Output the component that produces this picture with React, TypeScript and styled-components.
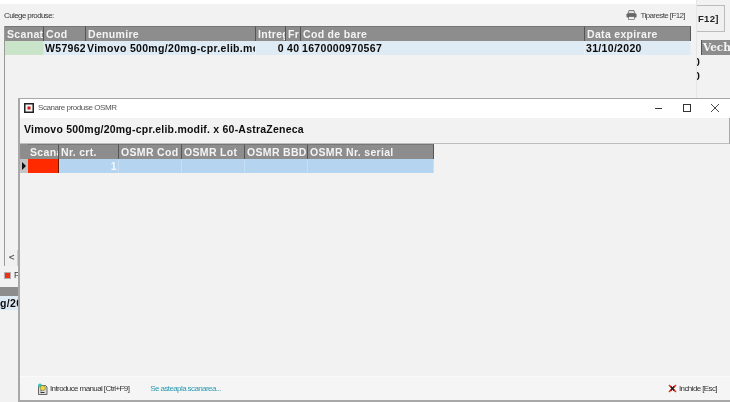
import React from "react";
import styled, { createGlobalStyle } from "styled-components";

const Global = createGlobalStyle`
  html, body { margin: 0; padding: 0; background: #f2f2f2; }
  #root { width: 730px; height: 402px; overflow: hidden; }
`;

const Desktop = styled.div`
  position: relative;
  width: 730px;
  height: 402px;
  overflow: hidden;
  background: #f2f2f2;
  font-family: "Liberation Sans", Arial, sans-serif;
  filter: blur(0.3px);
`;

const UI = `font-family: "Liberation Sans", Arial, sans-serif; font-size: 8px; letter-spacing: -0.6px; color: #333;`;
const Bold = `font-family: "Liberation Sans", Arial, sans-serif; font-weight: 700; font-size: 10.5px; letter-spacing: 0.32px;`;

const Window = styled.section<{ $x: number; $y: number; $w: number; $h: number }>`
  position: absolute;
  left: ${(p) => p.$x}px;
  top: ${(p) => p.$y}px;
  width: ${(p) => p.$w}px;
  height: ${(p) => p.$h}px;
  box-sizing: border-box;
`;

const MainWindow = styled(Window)`
  background: #f2f2f2;
  border-right: 1px solid #e6e6e6;
  padding: 4px 0 0 4px;
  display: flex;
  flex-direction: column;
  &::before {
    content: "";
    position: absolute;
    left: 0; top: 0; right: 0;
    height: 4px;
    background: #fff;
  }
`;

const TopBar = styled.div`
  height: 22px;
  display: flex;
  align-items: center;
  justify-content: space-between;
  padding-right: 11px;
  ${UI}
`;

const PrintAction = styled.div`
  display: flex;
  align-items: center;
  gap: 3px;
  color: #444;
`;

const GridFrame = styled.div`
  width: 687px;
  height: 240px;
  border-left: 1px solid #9a9a9a;
  box-sizing: border-box;
  position: relative;
`;

const Row = styled.div<{ $cols: string; $h: number }>`
  display: grid;
  grid-template-columns: ${(p) => p.$cols};
  height: ${(p) => p.$h}px;
`;

const HeadCell = styled.div`
  background: #8d8d8d;
  color: #f4f4f4;
  ${Bold}
  line-height: 15px;
  padding-left: 2px;
  border-right: 1px solid #555;
  border-top: 1px solid #777;
  box-sizing: border-box;
  white-space: nowrap;
  overflow: hidden;
`;

const Cell = styled.div<{ $bg?: string; $right?: boolean; $color?: string }>`
  background: ${(p) => p.$bg || "#deeaf4"};
  color: ${(p) => p.$color || "#0b0b0b"};
  ${Bold}
  line-height: 14px;
  text-align: ${(p) => (p.$right ? "right" : "left")};
  padding: 0 1px;
  white-space: nowrap;
  overflow: hidden;
  box-sizing: border-box;
  border-right: 1px solid ${(p) => (p.$bg === "#ff2a00" ? "#6a1a00" : "rgba(255,255,255,.25)")};
`;

const ScrollLeft = styled.span`
  position: absolute;
  left: 1px;
  bottom: 0;
  width: 11px;
  height: 16px;
  background: #f0f0f0;
  font-family: "DejaVu Sans", sans-serif;
  font-size: 8px;
  font-weight: 700;
  line-height: 16px;
  text-align: center;
  color: #555;
`;

const ScrollEnd = styled.span`
  position: absolute;
  left: 12px;
  bottom: 0;
  width: 1px;
  height: 16px;
  background: #cfcfcf;
`;

const Legend = styled.div`
  display: flex;
  align-items: center;
  gap: 3px;
  padding-top: 3px;
  height: 12px;
  ${UI}
  font-size: 8.5px;
  letter-spacing: 0;
`;

const Swatch = styled.span`
  width: 5px;
  height: 5px;
  background: #f03010;
  border: 1px solid #b0b0b0;
  box-sizing: content-box;
`;

const LowerGrid = styled(Window)`
  display: flex;
  flex-direction: column;
`;

const LowerHead = styled.div`
  height: 9px;
  background: #8d8d8d;
`;

const LowerRow = styled.div`
  height: 14px;
  background: #deeaf4;
  color: #0b0b0b;
  ${Bold}
  line-height: 14px;
  white-space: nowrap;
  overflow: hidden;
`;

const SideWindow = styled(Window)`
  background: #f2f2f2;
  display: flex;
  flex-direction: column;
`;

const SideButton = styled.div`
  width: 28px;
  height: 27px;
  margin-top: 5px;
  background: #f0f0f0;
  border: 1px solid #bcbcbc;
  border-left: 0;
  box-sizing: border-box;
  ${Bold}
  font-size: 9.5px;
  line-height: 26px;
  padding-left: 1px;
  color: #222;
  white-space: nowrap;
  overflow: hidden;
`;

const SideHead = styled.div`
  margin-top: 8px;
  height: 15px;
  background: #8d8d8d;
  border-left: 1px solid #555;
  margin-left: 4px;
  color: #f4f4f4;
  font-family: "DejaVu Serif", serif;
  font-weight: 700;
  font-size: 10.5px;
  line-height: 15px;
  padding-left: 1px;
`;

const SideGlyph = styled.div`
  height: 14px;
  ${Bold}
  line-height: 14px;
  color: #111;
  margin-left: -3px;
`;

const Dialog = styled(Window)`
  background: #f2f2f2;
  border-top: 1px solid #a8a8a8;
  border-left: 2px solid #a8a8a8;
  border-bottom: 2px solid #a8a8a8;
  display: flex;
  flex-direction: column;
`;

const TitleBar = styled.header`
  height: 19px;
  flex: none;
  box-sizing: border-box;
  padding: 0 0 2px 4px;
  background: #fff;
  display: flex;
  align-items: center;
  gap: 4px;
  ${UI}
  letter-spacing: -0.43px;
  color: #555;
`;

const WinControls = styled.div`
  margin-left: auto;
  display: flex;
  align-items: center;
  gap: 18px;
  padding-right: 10px;
`;

const ProductBar = styled.div`
  height: 26px;
  flex: none;
  box-sizing: border-box;
  padding: 4px 0 0 4px;
  ${Bold}
  letter-spacing: 0.22px;
  line-height: 15px;
  color: #0d0d0d;
  border-bottom: 1px solid #bdbdbd;
  border-right: 1px solid #a8a8a8;
`;

const ScanArea = styled.div`
  flex: 1;
  display: flex;
  align-items: flex-start;
  background: #f2f2f2;
`;

const Indicator = styled.div`
  width: 8px;
  height: 29px;
  flex: none;
  background: #8d8d8d;
  display: flex;
  flex-direction: column;
  justify-content: flex-end;
`;

const Pointer = styled.div`
  height: 14px;
  background: #c4c4c4;
  display: flex;
  align-items: center;
  padding-left: 2px;
  &::after {
    content: "";
    border-left: 4px solid #111;
    border-top: 4px solid transparent;
    border-bottom: 4px solid transparent;
  }
`;

const Footer = styled.footer`
  height: 24px;
  flex: none;
  box-sizing: border-box;
  display: flex;
  align-items: center;
  background: #f5f5f5;
  border-top: 1px solid #fafafa;
  padding-left: 17px;
  padding-right: 13px;
  ${UI}
`;

const FootAction = styled.div`
  display: flex;
  align-items: center;
  gap: 2px;
  color: #333;
`;

const ScanStatus = styled.div`
  margin-left: 21px;
  color: #2a9bb0;
`;

const CloseAction = styled(FootAction)`
  margin-left: auto;
`;

const mainCols = "39px 42px 170px 30px 15px 284px 106px";
const dlgCols = "31px 60px 63px 63px 63px 126px";

const Printer = () => (
  <svg width="11" height="10" viewBox="0 0 11 10">
    <path d="M3 0.5h5l1 3H2z" fill="#ddd" stroke="#555" strokeWidth=".7" />
    <rect x="0.5" y="3.5" width="10" height="4" rx=".8" fill="#666" />
    <rect x="2.5" y="6.5" width="6" height="3" fill="#eee" stroke="#555" strokeWidth=".6" />
  </svg>
);

const AppIcon = () => (
  <svg width="10" height="10" viewBox="0 0 10 10">
    <rect width="10" height="10" fill="#222" />
    <rect x="1.5" y="1.5" width="7" height="7" fill="#f4f4f4" />
    <rect x="3.5" y="3.5" width="3" height="3" fill="#d81818" />
  </svg>
);

const ManualIcon = () => (
  <svg width="11" height="12" viewBox="0 0 11 12">
    <path d="M1.5 2.5h7l1.5 1.5v7.5h-8.5z" fill="#ddd" stroke="#444" strokeWidth=".8" />
    <circle cx="3" cy="2.5" r="2" fill="#3cc4c4" />
    <circle cx="5.8" cy="5" r="2.6" fill="#e8d84c" stroke="#6a6a20" strokeWidth=".5" />
    <path d="M3.5 9.5h4M3.5 7.8h1" stroke="#333" strokeWidth="1" />
  </svg>
);

const CloseIcon = () => (
  <svg width="9" height="9" viewBox="0 0 9 9">
    <path d="M1 1L8 8M8 1L1 8" stroke="#ee2a1a" strokeWidth="1.6" />
    <path d="M2.8 2.5L6.2 6.5M6.2 2.5L2.8 6.5" stroke="#222" strokeWidth="1.5" />
  </svg>
);

const MinIcon = () => (
  <svg width="10" height="10" viewBox="0 0 10 10"><path d="M1 5.5h7" stroke="#333" /></svg>
);
const MaxIcon = () => (
  <svg width="10" height="10" viewBox="0 0 10 10"><rect x="1.5" y="1.5" width="7" height="7" fill="none" stroke="#333" /></svg>
);
const XIcon = () => (
  <svg width="10" height="10" viewBox="0 0 10 10"><path d="M1 1l8 8M9 1l-8 8" stroke="#333" strokeWidth=".9" /></svg>
);

export default function App() {
  return (
    <Desktop>
      <Global />
      <SideWindow $x={697} $y={0} $w={33} $h={98}>
        <SideButton>F12]</SideButton>
        <SideHead>Vech</SideHead>
        <SideGlyph>0</SideGlyph>
        <SideGlyph>0</SideGlyph>
      </SideWindow>
      <MainWindow $x={0} $y={0} $w={697} $h={287}>
        <TopBar>
          <span>Culege produse:</span>
          <PrintAction>
            <Printer />
            Tipareste [F12]
          </PrintAction>
        </TopBar>
        <GridFrame>
          <Row $cols={mainCols} $h={15}>
            {["Scanat", "Cod", "Denumire", "Intreg", "Fr", "Cod de bare", "Data expirare"].map((t) => (
              <HeadCell key={t}>{t}</HeadCell>
            ))}
          </Row>
          <Row $cols={mainCols} $h={14}>
            <Cell $bg="#c9e4c9" />
            <Cell>W57962</Cell>
            <Cell>Vimovo 500mg/20mg-cpr.elib.modif. x 60</Cell>
            <Cell $right>0</Cell>
            <Cell $right>40</Cell>
            <Cell>1670000970567</Cell>
            <Cell>31/10/2020</Cell>
          </Row>
          <ScrollLeft>&lt;</ScrollLeft>
          <ScrollEnd />
        </GridFrame>
        <Legend>
          <Swatch />P
        </Legend>
      </MainWindow>
      <LowerGrid $x={0} $y={287} $w={18} $h={23}>
        <LowerHead />
        <LowerRow>g/20</LowerRow>
      </LowerGrid>
      <Dialog $x={18} $y={98} $w={712} $h={304}>
        <TitleBar>
          <AppIcon />
          Scanare produse OSMR
          <WinControls>
            <MinIcon />
            <MaxIcon />
            <XIcon />
          </WinControls>
        </TitleBar>
        <ProductBar>Vimovo 500mg/20mg-cpr.elib.modif. x 60-AstraZeneca</ProductBar>
        <ScanArea>
          <Indicator>
            <Pointer />
          </Indicator>
          <div>
            <Row $cols={dlgCols} $h={15}>
              {["Scanat", "Nr. crt.", "OSMR Cod", "OSMR Lot", "OSMR BBD", "OSMR Nr. serial"].map((t) => (
                <HeadCell key={t}>{t}</HeadCell>
              ))}
            </Row>
            <Row $cols={dlgCols} $h={14}>
              <Cell $bg="#ff2a00" />
              <Cell $bg="#b4d4f0" $right $color="#f5f9fc">1</Cell>
              <Cell $bg="#b4d4f0" />
              <Cell $bg="#b4d4f0" />
              <Cell $bg="#b4d4f0" />
              <Cell $bg="#b4d4f0" />
            </Row>
          </div>
        </ScanArea>
        <Footer>
          <FootAction>
            <ManualIcon />
            Introduce manual [Ctrl+F9]
          </FootAction>
          <ScanStatus>Se asteapla scanarea...</ScanStatus>
          <CloseAction>
            <CloseIcon />
            Inchide [Esc]
          </CloseAction>
        </Footer>
      </Dialog>
    </Desktop>
  );
}
